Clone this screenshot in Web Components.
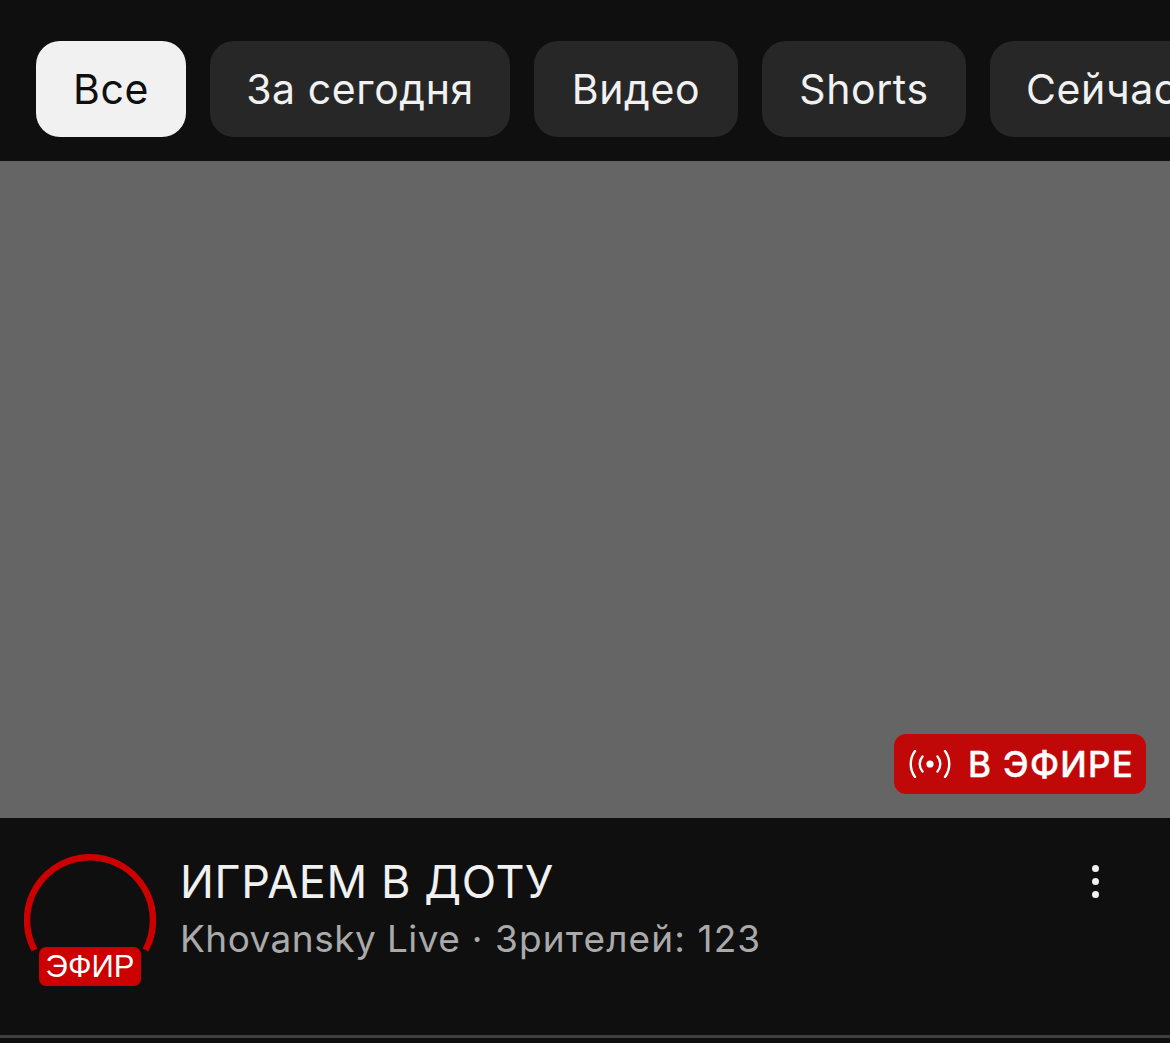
<!DOCTYPE html>
<html lang="ru">
<head>
<meta charset="utf-8">
<title>Лента</title>
<style>
html, body{
    margin: 0;
    height: 100%;
    background: #0f0f0f;
    font-family: Inter, "Noto Sans", sans-serif;
    overflow: hidden;
}
</style>
</head>
<body>
<feed-page>
    <chip-bar>
        <filter-chip active style="--w:150px">Все</filter-chip>
        <filter-chip style="--w:300px">За сегодня</filter-chip>
        <filter-chip style="--w:204px">Видео</filter-chip>
        <filter-chip style="--w:204px">Shorts</filter-chip>
        <filter-chip style="--w:300px;--align:flex-start">Сейчас</filter-chip>
    </chip-bar>
    <live-card title="ИГРАЕМ В ДОТУ" channel="Khovansky Live" viewers="· Зрителей: 123"></live-card>
</feed-page>

<script>
class FeedPage extends HTMLElement{
    constructor(){
        super();
        const shadow = this.attachShadow({ mode: 'open' });
        shadow.innerHTML = `
        <style>
        :host{
            display: flex;
            flex-direction: column;
            width: 1170px;
            height: 1043px;
            background: #0f0f0f;
        }
        </style>
        <slot></slot>
        `
    }
}

class ChipBar extends HTMLElement{
    constructor(){
        super();
        const shadow = this.attachShadow({ mode: 'open' });
        shadow.innerHTML = `
        <style>
        :host{
            display: flex;
            gap: 24px;
            padding: 41px 0 24px 36px;
            overflow: hidden;
        }
        </style>
        <slot></slot>
        `
    }
}

class FilterChip extends HTMLElement{
    constructor(){
        super();
        const shadow = this.attachShadow({ mode: 'open' });
        shadow.innerHTML = `
        <style>
        :host{
            display: flex;
            flex: none;
            align-items: center;
            justify-content: var(--align, center);
            width: var(--w);
            height: 96px;
            padding: 0 36px;
            box-sizing: border-box;
            border-radius: 24px;
            background: #272727;
            color: #f1f1f1;
            font: 400 41px Inter, "Noto Sans", sans-serif;
            letter-spacing: 0.6px;
            white-space: nowrap;
        }
        :host([active]){
            background: #f1f1f1;
            color: #0f0f0f;
        }
        </style>
        <slot></slot>
        `
    }
}

class LiveBadge extends HTMLElement{
    constructor(){
        super();
        const shadow = this.attachShadow({ mode: 'open' });
        shadow.innerHTML = `
        <style>
        :host{
            display: flex;
            align-items: center;
            gap: 17px;
            width: 252px;
            height: 60px;
            padding-left: 15px;
            box-sizing: border-box;
            border-radius: 12px;
            background: #c00808;
            color: #fff;
            font: 500 35px Inter, "Noto Sans", sans-serif;
            letter-spacing: 1.3px;
            -webkit-text-stroke: 0.4px #fff;
        }
        svg{
            flex: none;
            width: 42px;
            height: 28px;
            fill: none;
            stroke: #fff;
            stroke-width: 2.4;
            stroke-linecap: round;
        }
        </style>
        <svg viewBox="0 0 42 28">
            <circle cx="21" cy="14" r="3.6" fill="#fff" stroke="none"/>
            <path d="M13.5 6.5a11.5 11.5 0 0 0 0 15"/>
            <path d="M28.5 6.5a11.5 11.5 0 0 1 0 15"/>
            <path d="M6 1a22 22 0 0 0 0 26"/>
            <path d="M36 1a22 22 0 0 1 0 26"/>
        </svg>
        <span>В ЭФИРЕ</span>
        `
    }
}

class LiveAvatar extends HTMLElement{
    constructor(){
        super();
        const shadow = this.attachShadow({ mode: 'open' });
        shadow.innerHTML = `
        <style>
        :host{
            display: block;
            position: relative;
            flex: none;
            width: 132px;
            height: 132px;
        }
        svg{
            display: block;
            width: 132px;
            height: 132px;
        }
        span{
            position: absolute;
            left: 15px;
            top: 93px;
            width: 102px;
            height: 39px;
            border-radius: 7px;
            background: #cc0000;
            color: #fff;
            font: 400 31px/40px "Liberation Sans", Arial, sans-serif;
            text-align: center;
        }
        </style>
        <svg viewBox="0 0 132 132">
            <path d="M10.5 96A63 63 0 1 1 121.5 96" fill="none" stroke="#cc0000" stroke-width="6.5"/>
        </svg>
        <span>ЭФИР</span>
        `
    }
}

class LiveCard extends HTMLElement{
    constructor(){
        super();
        const shadow = this.attachShadow({ mode: 'open' });
        shadow.innerHTML = `
        <style>
        :host{
            display: block;
            color: #f1f1f1;
        }
        .thumb{
            display: flex;
            justify-content: flex-end;
            align-items: flex-end;
            height: 657px;
            padding: 0 24px 24px 0;
            box-sizing: border-box;
            background: #656565;
        }
        .info{
            display: flex;
            gap: 24px;
            height: 220px;
            padding: 36px 0 0 24px;
            box-sizing: border-box;
            border-bottom: 3px solid #3f3f3f;
        }
        .text{
            flex: 1;
            display: flex;
            flex-direction: column;
            gap: 7px;
        }
        .title{
            font: 400 45px/56px Inter, "Noto Sans", sans-serif;
            letter-spacing: 0.6px;
        }
        .meta{
            font: 400 37px/44px Inter, "Noto Sans", sans-serif;
            letter-spacing: 1.1px;
            color: #aaaaaa;
        }
        .channel{
            letter-spacing: 0.45px;
        }
        .more{
            flex: none;
            display: flex;
            flex-direction: column;
            gap: 6.3px;
            margin: 10.5px 71.5px 0 0;
        }
        .more i{
            width: 7px;
            height: 7px;
            border-radius: 50%;
            background: #f1f1f1;
        }
        </style>
        <div class="thumb"><live-badge></live-badge></div>
        <div class="info">
            <live-avatar></live-avatar>
            <div class="text">
                <div class="title"></div>
                <div class="meta"><span class="channel"></span> <span class="viewers"></span></div>
            </div>
            <div class="more"><i></i><i></i><i></i></div>
        </div>
        `
    }
    connectedCallback(){
        this.shadowRoot.querySelector(".title").textContent = this.getAttribute("title");
        this.shadowRoot.querySelector(".channel").textContent = this.getAttribute("channel");
        this.shadowRoot.querySelector(".viewers").textContent = this.getAttribute("viewers");
    }
}

customElements.define("feed-page", FeedPage);
customElements.define("chip-bar", ChipBar);
customElements.define("filter-chip", FilterChip);
customElements.define("live-badge", LiveBadge);
customElements.define("live-avatar", LiveAvatar);
customElements.define("live-card", LiveCard);
</script>
</body>
</html>
